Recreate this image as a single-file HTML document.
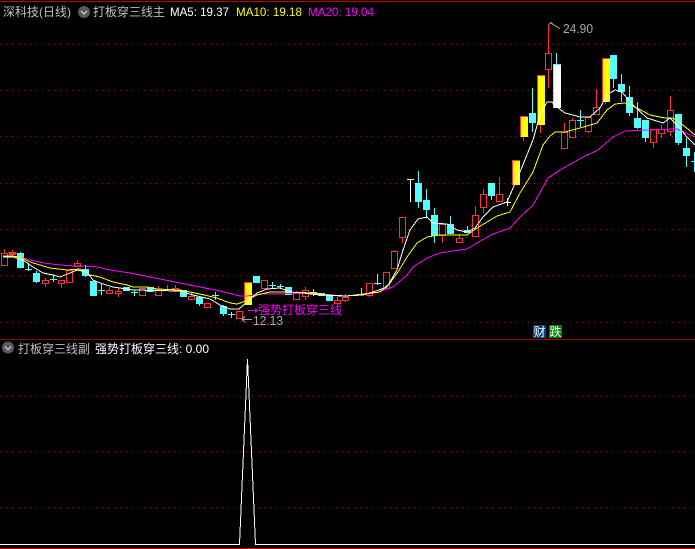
<!DOCTYPE html>
<html>
<head>
<meta charset="utf-8">
<style>
html,body{margin:0;padding:0;background:#000;width:695px;height:549px;overflow:hidden}
svg{display:block;position:absolute;left:0;top:0}
text{font-family:"Liberation Sans","WenQuanYi Zen Hei","Noto Sans CJK SC",sans-serif;font-size:12px}
.c{shape-rendering:crispEdges}
</style>
</head>
<body>
<svg width="695" height="549" viewBox="0 0 695 549" xmlns="http://www.w3.org/2000/svg">
<!-- frame -->
<g class="c" fill="none">
<path d="M0 1.5H695M23.5 0V2" stroke="#c00000"/>
<path d="M0 339.5H695" stroke="#a00000"/>
<path d="M0 548.5H695" stroke="#d00000"/>
<path d="M0 44.500H695M0 90.500H695M0 136.500H695M0 183.500H695M0 229.500H695M0 275.500H695M0 322.500H695M0 396.500H695M0 451.500H695M0 507.500H695" stroke="#8a1c1c" stroke-dasharray="1 5"/>
</g>
<!-- cyan candles -->
<g class="c">
<path fill="none" stroke="#54fcfc" d="M20.5 252V254M28.5 263V271M36.5 271V283M53.5 275V282M85.5 265V277M101.5 284V295M134.5 290V296M199.5 304V306M215.5 292V300M223.5 305V316M231.5 312V318M272.5 282V288M280.5 284V289M313.5 289V296M361.5 288V294M377.5 274V285M418.5 171V208M426.5 189V218M434.5 208V243M450.5 216V234M467.5 226V233M491.5 196V200M532.5 88V132M556.5 53V64M580.5 110V127M613.5 79V88M621.5 74V102M629.5 86V116M637.5 102V129M645.5 138V142M678.5 143V145M686.5 138V167M694.5 152V172M25 269.5H32M50 279.5H57M98 290.5H105M131 292.5H138M212 295.5H219M228 314.5H235M269 285.5H276M277 286.5H284M310 292.5H317M374 283.5H381M577 120.5H584M691 161.5H695"/>
<g fill="#54fcfc">
<rect x="17" y="253" width="7" height="15"/>
<rect x="33" y="273" width="7" height="9"/>
<rect x="82" y="269" width="7" height="7"/>
<rect x="90" y="281" width="7" height="15"/>
<rect x="123" y="287" width="7" height="4"/>
<rect x="147" y="287" width="7" height="5"/>
<rect x="180" y="290" width="7" height="7"/>
<rect x="196" y="297" width="7" height="7"/>
<rect x="220" y="306" width="7" height="8"/>
<rect x="253" y="276" width="7" height="7"/>
<rect x="285" y="287" width="7" height="8"/>
<rect x="318" y="293" width="7" height="3"/>
<rect x="326" y="296" width="7" height="5"/>
<rect x="415" y="183" width="7" height="19"/>
<rect x="423" y="200" width="7" height="10"/>
<rect x="431" y="215" width="7" height="21"/>
<rect x="447" y="224" width="7" height="10"/>
<rect x="464" y="230" width="7" height="3"/>
<rect x="488" y="183" width="7" height="13"/>
<rect x="529" y="113" width="7" height="10"/>
<rect x="610" y="55" width="7" height="24"/>
<rect x="618" y="84" width="7" height="8"/>
<rect x="626" y="97" width="7" height="16"/>
<rect x="634" y="118" width="7" height="10"/>
<rect x="642" y="120" width="7" height="18"/>
<rect x="675" y="114" width="7" height="29"/>
<rect x="683" y="148" width="7" height="8"/>
</g>
</g>
<!-- red candles -->
<g class="c" fill="none" stroke="#ff3232">
<path d="M4.5 249V253M4.5 265V266M12.5 250V256M45.5 278V280M45.5 283V287M61.5 283V288M77.5 260V263M109.5 287V290M109.5 293V294M118.5 287V291M118.5 293V297M158.5 286V289M167.5 285V291M175.500 285V288M175.500 290V292M191.500 293V296M296.500 291V293M305.500 287V290M305.500 296V300M337.500 297V300M345.500 294V297M345.500 300V302M369.500 295V297M394.500 250V251M402.500 237V243M442.500 235V243M459.500 234V238M475.500 206V215M483.500 189V194M483.500 207V213M499.500 177V194M548.500 24V53M548.500 69V88M564.500 123V132M572.500 118V120M588.500 131V133M596.500 89V107M653.500 142V148M661.500 125V129M661.500 133V138M670.500 96V110M670.500 131V136"/>
<path d="M9 252.500h7v2h-7z" fill="#ff3232"/>
<rect x="1.5" y="253.5" width="6" height="12"/>
<rect x="42.5" y="280.5" width="6" height="3"/>
<rect x="58.5" y="280.5" width="6" height="3"/>
<rect x="66.5" y="270.5" width="6" height="12"/>
<rect x="74.5" y="263.5" width="6" height="3"/>
<rect x="106.5" y="290.5" width="6" height="3"/>
<rect x="115.5" y="291.5" width="6" height="2"/>
<rect x="139.5" y="288.5" width="6" height="7"/>
<rect x="155.5" y="289.5" width="6" height="6"/>
<rect x="172.5" y="288.5" width="6" height="2"/>
<rect x="188.5" y="296.5" width="6" height="3"/>
<rect x="204.5" y="303.5" width="6" height="4"/>
<rect x="236.5" y="311.5" width="6" height="7"/>
<rect x="261.5" y="280.5" width="6" height="8"/>
<rect x="293.5" y="293.5" width="6" height="6"/>
<rect x="302.5" y="290.5" width="6" height="6"/>
<rect x="334.5" y="300.5" width="6" height="3"/>
<rect x="342.5" y="297.5" width="6" height="3"/>
<rect x="366.5" y="283.5" width="6" height="12"/>
<rect x="383.5" y="272.5" width="6" height="16"/>
<rect x="391.5" y="251.5" width="6" height="17"/>
<rect x="399.5" y="217.5" width="6" height="20"/>
<rect x="439.5" y="224.5" width="6" height="11"/>
<rect x="456.5" y="238.5" width="6" height="4"/>
<rect x="472.5" y="215.5" width="6" height="21"/>
<rect x="480.5" y="194.5" width="6" height="13"/>
<rect x="496.5" y="194.5" width="6" height="7"/>
<rect x="545.5" y="53.5" width="6" height="16"/>
<rect x="561.5" y="132.5" width="6" height="16"/>
<rect x="569.5" y="120.5" width="6" height="17"/>
<rect x="585.5" y="117.5" width="6" height="14"/>
<rect x="593.5" y="107.5" width="6" height="7"/>
<rect x="650.5" y="129.5" width="6" height="13"/>
<rect x="658.5" y="129.5" width="6" height="4"/>
<rect x="667.5" y="110.5" width="6" height="21"/>
</g>
<!-- yellow and white bodies -->
<g class="c">
<path d="M523.5 137V141M540.5 125V133M605.5 102V104" fill="none" stroke="#ff3232"/>
<g fill="#ffff00">
<rect x="245" y="282" width="7" height="23"/>
<rect x="513" y="160" width="7" height="25"/>
<rect x="521" y="116" width="7" height="21"/>
<rect x="538" y="75" width="7" height="50"/>
<rect x="603" y="58" width="7" height="44"/>
</g>
<path d="M244.5 282V305M512.5 160V185M520.5 116V137M537.5 75V125M602.5 58V102M244 282.5H252M512 160.500H520M520 116.500H528M537 75.500H545M602 58.500H610" fill="none" stroke="#ff3232"/>
<rect x="554" y="64" width="7" height="44" fill="#fff"/>
<path d="M553.5 64V108M553 64.500H561" fill="none" stroke="#54fcfc"/>
<path d="M410.5 179V202M504 202.500H511M507.500 198V206" stroke="#fff" fill="none"/>
<path d="M407 179.500H414" stroke="#ffff66" fill="none"/>
</g>
<!-- moving averages -->
<g class="c" fill="none" stroke-width="1" stroke-linejoin="round">
<polyline stroke="#ff00ff" points="3,256 20,257 30,260 44,263 60,265 75,266 95,266.5 110,270 130,273 150,277 180,283 200,287 220,291 240,296 247,296 260,294 280,294 300,293 320,294 345,296 360,295 375,293 393,287 407,275 413,267 427,258 440,253 453,251 467,249 477,243 493,234 510,228 520,217 533,205 548,178 560,170 583,157 598,150 613,137 625,131 647,130 677,129 695,137"/>
<polyline stroke="#ffff00" points="3,256 12,256 20,257 30,262 40,265 50,268 67,270 80,269 90,275 100,277 113,282 127,285 133,287 147,287 157,289 180,290 200,294 217,298 230,303 237,304 243,302 257,295 270,292 287,292 313,293 327,295 347,296 363,294 380,292 390,283 398,272 407,257 417,243 427,237 440,235 467,235 477,228 487,222 497,216 510,212 520,193 533,172 543,145 550,136 555,132 565,132 580,128 597,123 607,110 615,104 625,103 637,108 650,115 665,118 673,118 683,125 695,135"/>
<polyline stroke="#ffffff" points="3,257 13,257 23,260 33,267 43,273 53,275 60,277 70,273 77,270 87,272 93,280 103,284 113,287 133,290 180,291 193,295 210,299 220,305 230,309 239,309 247,302 257,293 267,289 280,288 290,292 303,293 320,295 343,296 363,295 373,292 387,287 397,270 403,250 410,230 418,219 427,217 433,223 447,224 457,230 467,232 475,228 483,217 493,207 507,202 520,172 533,140 540,115 547,102 552,102 557,107 565,113 580,117 590,117 600,108 607,95 615,90 622,92 633,105 647,118 663,123 670,118 677,125 687,137 695,145"/>
</g>
<!-- price markers -->
<path class="c" d="M549 24.500L551 22.500L553 24.500L560 28.500" fill="none" stroke="#a8a8a8"/>
<path class="c" d="M242 319.500H252M242 319.500l3-3M242 319.500l3 3" fill="none" stroke="#a8a8a8"/>
<text x="563" y="33" fill="#a8a8a8" style="font-size:13px" textLength="30" lengthAdjust="spacingAndGlyphs">24.90</text>
<text x="253" y="325" fill="#a8a8a8" style="font-size:13px" textLength="30" lengthAdjust="spacingAndGlyphs">12.13</text>
<path class="c" d="M248 310.500H257M255 308.500l2 2-2 2" fill="none" stroke="#ff00ff"/>
<text x="258" y="314" fill="#ff00ff" textLength="84">强势打板穿三线</text>
<!-- badges -->
<rect x="533" y="325" width="13" height="13" fill="#004080"/>
<rect x="549" y="325" width="13" height="13" fill="#008000"/>
<text x="533.5" y="336" fill="#fff">财</text>
<text x="549.5" y="336" fill="#fff">跌</text>
<!-- header -->
<text x="3" y="16" fill="#c0c0c0">深科技(日线)</text>
<circle cx="84" cy="12" r="6" fill="#5a5a5a"/>
<path d="M81 11l3 3 3-3" fill="none" stroke="#d8d8d8" stroke-width="1.2"/>
<text x="93" y="16" fill="#c0c0c0">打板穿三线主</text>
<text x="170" y="16" fill="#fff" textLength="59" lengthAdjust="spacingAndGlyphs">MA5: 19.37</text>
<text x="236" y="16" fill="#ffff00" textLength="66" lengthAdjust="spacingAndGlyphs">MA10: 19.18</text>
<text x="308" y="16" fill="#ff00ff" textLength="66" lengthAdjust="spacingAndGlyphs">MA20: 19.04</text>
<!-- sub panel -->
<circle cx="8" cy="347.500" r="6" fill="#5a5a5a"/>
<path d="M5 346.500l3 3 3-3" fill="none" stroke="#d8d8d8" stroke-width="1.2"/>
<text x="18" y="353" fill="#c0c0c0">打板穿三线副</text>
<text x="95" y="353" fill="#fff">强势打板穿三线: 0.00</text>
<polyline class="c" points="0,544.500 239.500,544.500 247.500,359 255.500,544.500 695,544.500" fill="none" stroke="#fff" stroke-width="1"/>
</svg>
</body>
</html>
